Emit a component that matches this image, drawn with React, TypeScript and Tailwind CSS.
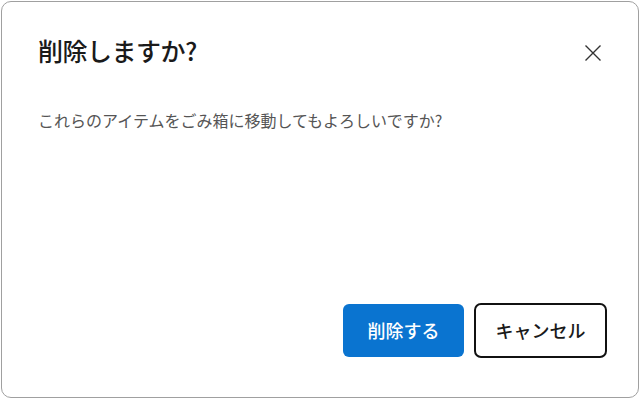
import React from "react";

export default function App() {
  return (
    <div className="w-[640px] h-[400px] bg-white p-px" style={{ fontFamily: '"Noto Sans CJK JP", "Noto Sans", sans-serif' }}>
      <div className="w-[638px] h-[397px] border border-[#a0a0a0] rounded-[10px] bg-white flex flex-col">
        <div className="flex items-start justify-between pl-[36px] pr-[36px] pt-[30px]">
          <h1 className="text-[25px] leading-[36px] font-medium text-[#1a1a1a] tracking-[-0.5px]">削除しますか?</h1>
          <button className="mt-[12px] w-[18px] h-[18px] flex items-center justify-center text-[#333]">
            <svg width="18" height="18" viewBox="0 0 18 18" fill="none" stroke="currentColor" strokeWidth="1.4">
              <path d="M1.5 1.5 L16.5 16.5 M16.5 1.5 L1.5 16.5" />
            </svg>
          </button>
        </div>
        <p className="pl-[36px] mt-[40px] text-[16px] leading-[24px] text-[#555555]">
          これらのアイテムをごみ箱に移動してもよろしいですか?
        </p>
        <div className="flex-1" />
        <div className="flex justify-end items-center gap-[10px] pr-[31px] pb-[39px]">
          <button className="w-[121px] h-[53px] rounded-[6px] bg-[#0a74d0] text-white text-[18px] font-medium">
            削除する
          </button>
          <button className="w-[133px] h-[55px] rounded-[7px] border-2 border-[#111] bg-white text-[#1a1a1a] text-[18px] font-medium">
            キャンセル
          </button>
        </div>
      </div>
    </div>
  );
}
